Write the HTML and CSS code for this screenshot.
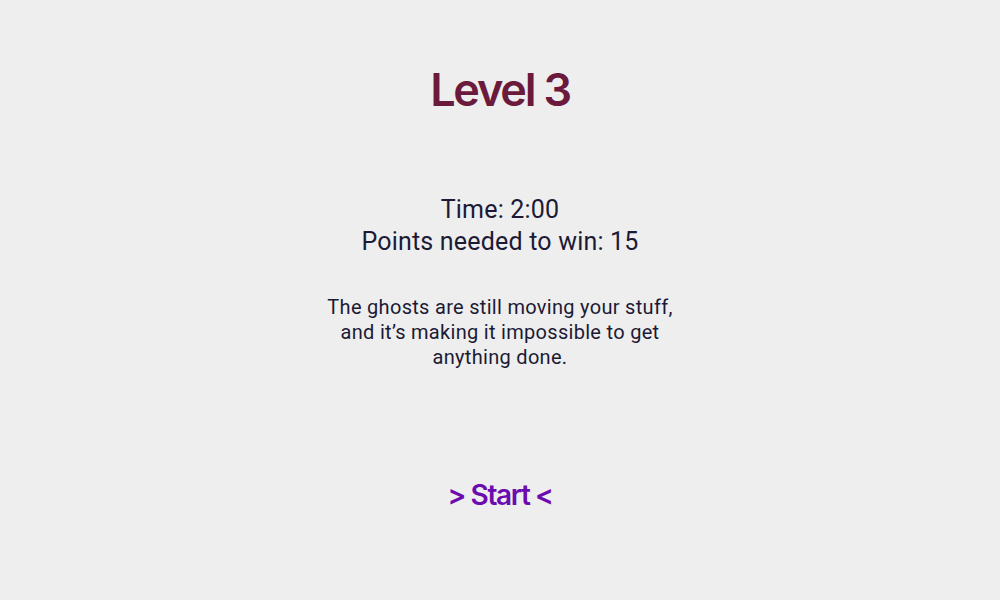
FILE: index.html
```html
<!DOCTYPE html>
<html>
<head>
<meta charset="utf-8">
<link rel="stylesheet" href="styles.css">
</head>
<body>
<main class="screen">
  <h1 class="title">Level 3</h1>
  <div class="stats">
    <div>Time: 2:00</div>
    <div>Points needed to win: 15</div>
  </div>
  <p class="story">The ghosts are still moving your stuff, and it’s making it impossible to get anything done.</p>
  <button class="start">&gt; Start &lt;</button>
</main>
</body>
</html>
```
FILE: styles.css
```css
html, body {
  margin: 0;
  padding: 0;
  background: #eeeeee;
}
.screen {
  width: 1000px;
  height: 600px;
  display: flex;
  flex-direction: column;
  align-items: center;
  font-family: Roboto, "Liberation Sans", sans-serif;
  color: #1c1a35;
}
.title {
  margin: 62px 0 0 0;
  font-family: Inter, "Liberation Sans", sans-serif;
  font-weight: 600;
  font-size: 45px;
  line-height: 56px;
  letter-spacing: -2.2px;
  color: #6b1a3b;
}
.stats {
  margin-top: 76px;
  font-size: 25px;
  line-height: 32px;
  letter-spacing: 0.2px;
  text-align: center;
}
.story {
  margin: 37px 0 0 0;
  width: 360px;
  font-size: 20px;
  line-height: 25px;
  letter-spacing: 0.3px;
  text-align: center;
}
.start {
  margin-top: 108px;
  border: none;
  background: none;
  padding: 0;
  font-family: Inter, "Liberation Sans", sans-serif;
  font-weight: 600;
  font-size: 28px;
  letter-spacing: -1.4px;
  color: #6c0bb0;
  cursor: pointer;
}
```
